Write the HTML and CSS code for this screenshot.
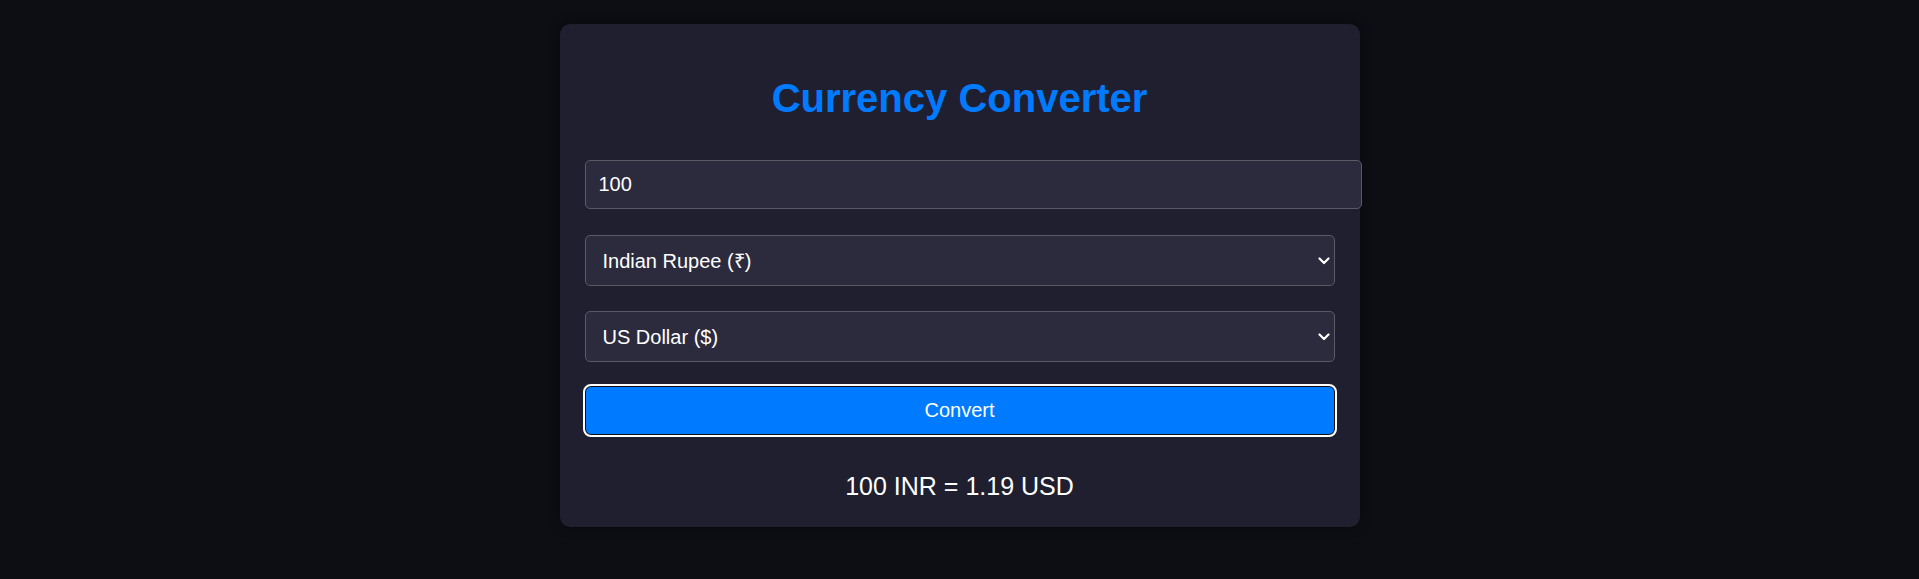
FILE: index.html
```html
<!DOCTYPE html>
<html lang="en">
<head>
<meta charset="utf-8">
<title>Currency Converter</title>
<link rel="stylesheet" href="styles.css">
</head>
<body>
<main class="card">
  <h1 class="title">Currency Converter</h1>
  <div class="form">
    <input class="amount" type="number" value="100">
    <div class="select-wrap">
      <select class="currency">
        <option selected>Indian Rupee (₹)</option>
        <option>US Dollar ($)</option>
      </select>
      <svg class="chevron" viewBox="0 0 12 8" width="12" height="8" aria-hidden="true"><path d="M1.5 1.5 L6 6 L10.5 1.5" fill="none" stroke="#fff" stroke-width="2.2" stroke-linecap="round" stroke-linejoin="round"/></svg>
    </div>
    <div class="select-wrap last">
      <select class="currency">
        <option>Indian Rupee (₹)</option>
        <option selected>US Dollar ($)</option>
      </select>
      <svg class="chevron" viewBox="0 0 12 8" width="12" height="8" aria-hidden="true"><path d="M1.5 1.5 L6 6 L10.5 1.5" fill="none" stroke="#fff" stroke-width="2.2" stroke-linecap="round" stroke-linejoin="round"/></svg>
    </div>
    <button class="convert" type="button">Convert</button>
  </div>
  <p class="result">100 INR = 1.19 USD</p>
</main>
</body>
</html>
```

FILE: styles.css
```css
html, body {
  margin: 0;
  padding: 0;
}

body {
  background: #0c0e13;
  font-family: "Liberation Sans", Arial, sans-serif;
  color: #fff;
  padding-top: 24px;
  min-height: 555px;
}

.card {
  width: 750px;
  margin: 0 auto;
  padding: 25px 25px 25px;
  background: #1f1f2f;
  border-radius: 10px;
  box-shadow: 0 0 12px rgba(0, 0, 0, 0.45);
}

.title {
  margin: 26px 0 39px;
  font-size: 40px;
  font-weight: bold;
  color: #007bff;
  text-align: center;
  line-height: 46px;
}

.form {
  display: flex;
  flex-direction: column;
  align-items: flex-start;
}

.amount {
  width: 100%;
  box-sizing: content-box;
  padding: 12px 12px 12px 13px;
  border: 1px solid #5a5a66;
  border-radius: 5px;
  background: #2b2b3d;
  color: #fff;
  font-family: "Liberation Sans", Arial, sans-serif;
  font-size: 20px;
  line-height: 23px;
  height: 23px;
  margin: 0 0 26px;
  -moz-appearance: textfield;
  appearance: textfield;
  outline: none;
}

.amount::-webkit-inner-spin-button,
.amount::-webkit-outer-spin-button {
  -webkit-appearance: none;
  margin: 0;
}

.select-wrap {
  position: relative;
  width: 100%;
  margin: 0 0 25px;
}

.select-wrap.last {
  margin-bottom: 24px;
}

.currency {
  display: block;
  width: 100%;
  box-sizing: border-box;
  height: 51px;
  padding: 0 30px 0 17px;
  border: 1px solid #5a5a66;
  border-radius: 5px;
  background: #2b2b3d;
  color: #fff;
  -webkit-appearance: none;
  appearance: none;
  font-family: "Liberation Sans", Arial, sans-serif;
  font-size: 20px;
}

.chevron {
  position: absolute;
  right: 5px;
  top: 22px;
  width: 12px;
  height: 8px;
  pointer-events: none;
}

.convert {
  width: 100%;
  box-sizing: border-box;
  height: 49px;
  padding: 0;
  border: 1px solid #101010;
  border-radius: 6px;
  outline: 2px solid #fff;
  outline-offset: 0;
  background: #007bff;
  color: #fff;
  font-family: "Liberation Sans", Arial, sans-serif;
  font-size: 20px;
}

.result {
  margin: 37px 0 2px;
  font-size: 25px;
  line-height: 28px;
  text-align: center;
}
```
